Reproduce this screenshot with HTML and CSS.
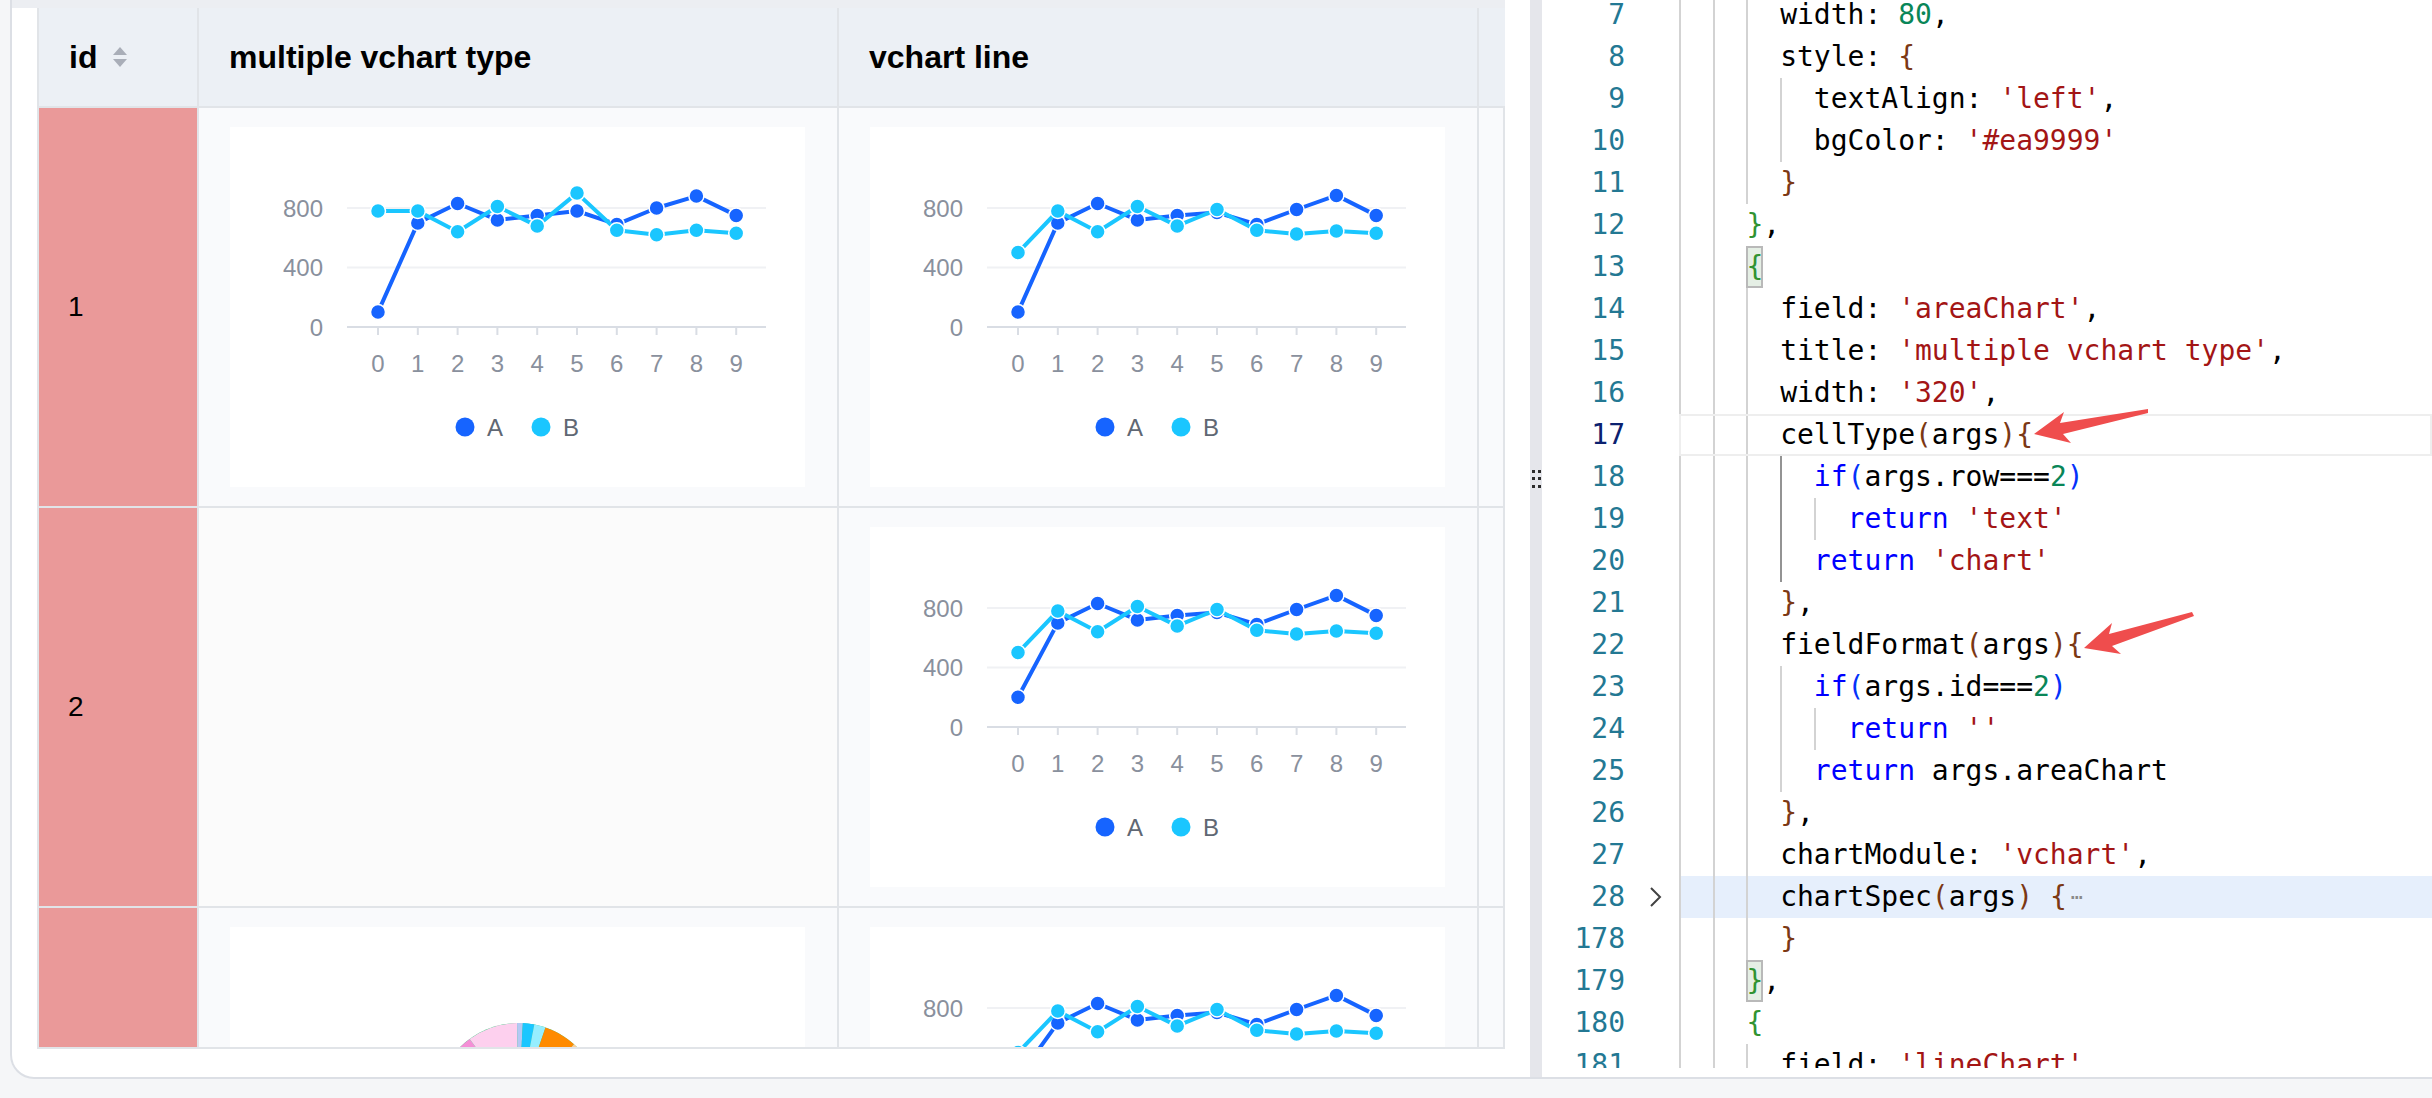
FILE: index.html
```html
<!DOCTYPE html>
<html lang="en">
<head>
<meta charset="utf-8">
<title>VTable chart cellType demo</title>
<link rel="stylesheet" href="styles.css">
</head>
<body>
<div class="card">
  <section class="left">
    <div class="topstrip"></div>
    <div class="tablewrap">
      <div class="grid">
        <div class="cell head"><span>id</span><svg class="sort" viewBox="0 0 14 20" width="14" height="20"><path d="M7 0L14 8H0Z"/><path d="M0 12H14L7 20Z"/></svg></div>
        <div class="cell head">multiple vchart type</div>
        <div class="cell head">vchart line</div>
        <div class="cell head"></div>

        <div class="cell idc">1</div>
        <div class="cell chart"><div class="box" data-a="100,700,830,720,750,780,690,800,880,750" data-b="780,780,640,810,680,900,650,620,650,630"></div></div>
        <div class="cell chart"><div class="box" data-a="100,700,830,720,750,770,690,790,885,750" data-b="500,780,640,810,680,790,650,625,645,630"></div></div>
        <div class="cell"></div>

        <div class="cell idc">2</div>
        <div class="cell empty"></div>
        <div class="cell chart"><div class="box" data-a="200,700,830,720,750,770,690,790,885,750" data-b="500,780,640,810,680,790,650,625,645,630"></div></div>
        <div class="cell"></div>

        <div class="cell idc"></div>
        <div class="cell chart"><div class="box">
          <svg class="pie" viewBox="0 0 575 360" width="575" height="360">
            <circle cx="288.5" cy="179" r="83" fill="#3cc780"/>
            <path d="M288.5 179L205.5 179A83 83 0 0 1 239.7 111.9Z" fill="#f48fd6"/>
            <path d="M288.5 179L239.7 111.9A83 83 0 0 1 287.05 96.01Z" fill="#fdd0ee"/>
            <path d="M288.5 179L287.05 96.01A83 83 0 0 1 292.84 96.1Z" fill="#b4c8f4"/>
            <path d="M288.5 179L292.84 96.1A83 83 0 0 1 304.3 97.5Z" fill="#1ac6ff"/>
            <path d="M288.5 179L304.3 97.5A83 83 0 0 1 315.5 100.5Z" fill="#96eeff"/>
            <path d="M288.5 179L315.5 100.5A83 83 0 0 1 344 117.3Z" fill="#ff8a00"/>
            <path d="M288.5 179L344 117.3A83 83 0 0 1 371.5 179Z" fill="#ffce96"/>
          </svg>
        </div></div>
        <div class="cell chart"><div class="box" data-partial="1" data-a="330,700,830,720,750,770,690,790,885,750" data-b="500,780,640,810,680,790,650,625,645,630"></div></div>
        <div class="cell"></div>
      </div>
    </div>
  </section>

  <div class="splitter"><svg class="grip" viewBox="0 0 12 18" width="12" height="18"><rect x="2" y="0" width="3" height="3"/><rect x="8" y="0" width="3" height="3"/><rect x="2" y="7" width="3" height="3"/><rect x="8" y="7" width="3" height="3"/><rect x="2" y="15" width="3" height="3"/><rect x="8" y="15" width="3" height="3"/></svg></div>

  <section class="editor">
    <div class="viewport">
      <div class="lines">
        <div class="ln"><span class="num">7</span><span class="fold"></span><span class="code i6">width: <span class="n">80</span>,</span></div>
        <div class="ln"><span class="num">8</span><span class="fold"></span><span class="code i6">style: <span class="b3">{</span></span></div>
        <div class="ln"><span class="num">9</span><span class="fold"></span><span class="code i8">textAlign: <span class="s">'left'</span>,</span></div>
        <div class="ln"><span class="num">10</span><span class="fold"></span><span class="code i8">bgColor: <span class="s">'#ea9999'</span></span></div>
        <div class="ln"><span class="num">11</span><span class="fold"></span><span class="code i6"><span class="b3">}</span></span></div>
        <div class="ln"><span class="num">12</span><span class="fold"></span><span class="code i4"><span class="b2">}</span>,</span></div>
        <div class="ln"><span class="num">13</span><span class="fold"></span><span class="code i4"><span class="bm b2">{</span></span></div>
        <div class="ln"><span class="num">14</span><span class="fold"></span><span class="code i6">field: <span class="s">'areaChart'</span>,</span></div>
        <div class="ln"><span class="num">15</span><span class="fold"></span><span class="code i6">title: <span class="s">'multiple vchart type'</span>,</span></div>
        <div class="ln"><span class="num">16</span><span class="fold"></span><span class="code i6">width: <span class="s">'320'</span>,</span></div>
        <div class="ln"><span class="num act">17</span><span class="fold"></span><span class="code i6 cur">cellType<span class="b3">(</span>args<span class="b3">)</span><span class="b3">{</span></span></div>
        <div class="ln"><span class="num">18</span><span class="fold"></span><span class="code i8 act6"><span class="k">if</span><span class="b1">(</span>args.row===<span class="n">2</span><span class="b1">)</span></span></div>
        <div class="ln"><span class="num">19</span><span class="fold"></span><span class="code i10 act6"><span class="k">return</span> <span class="s">'text'</span></span></div>
        <div class="ln"><span class="num">20</span><span class="fold"></span><span class="code i8 act6"><span class="k">return</span> <span class="s">'chart'</span></span></div>
        <div class="ln"><span class="num">21</span><span class="fold"></span><span class="code i6"><span class="b3">}</span>,</span></div>
        <div class="ln"><span class="num">22</span><span class="fold"></span><span class="code i6">fieldFormat<span class="b3">(</span>args<span class="b3">)</span><span class="b3">{</span></span></div>
        <div class="ln"><span class="num">23</span><span class="fold"></span><span class="code i8"><span class="k">if</span><span class="b1">(</span>args.id===<span class="n">2</span><span class="b1">)</span></span></div>
        <div class="ln"><span class="num">24</span><span class="fold"></span><span class="code i10"><span class="k">return</span> <span class="s">''</span></span></div>
        <div class="ln"><span class="num">25</span><span class="fold"></span><span class="code i8"><span class="k">return</span> args.areaChart</span></div>
        <div class="ln"><span class="num">26</span><span class="fold"></span><span class="code i6"><span class="b3">}</span>,</span></div>
        <div class="ln"><span class="num">27</span><span class="fold"></span><span class="code i6">chartModule: <span class="s">'vchart'</span>,</span></div>
        <div class="ln"><span class="num">28</span><span class="fold"><svg class="chev" viewBox="0 0 14 20" width="14" height="20"><path d="M2 1L11 10L2 19"/></svg></span><span class="code i6 folded">chartSpec<span class="b3">(</span>args<span class="b3">)</span> <span class="b3">{</span><span class="ell">⋯</span></span></div>
        <div class="ln"><span class="num">178</span><span class="fold"></span><span class="code i6"><span class="b3">}</span></span></div>
        <div class="ln"><span class="num">179</span><span class="fold"></span><span class="code i4"><span class="bm b2">}</span>,</span></div>
        <div class="ln"><span class="num">180</span><span class="fold"></span><span class="code i4"><span class="b2">{</span></span></div>
        <div class="ln last"><span class="num">181</span><span class="fold"></span><span class="code i6">field: <span class="s">'lineChart'</span>,</span></div>
      </div>
    </div>
    <svg class="arrows" viewBox="0 0 890 1077" width="890" height="1077">
      <polygon points="492,434 522,412 518,423 606,409 606,413 521,434 529,443"/>
      <polygon points="542,648 570,623 567,634 650,612 652,616 570,646 579,654"/>
    </svg>
  </section>
</div>
<script src="chart.js"></script>
</body>
</html>
```

FILE: styles.css
```css
* { box-sizing: border-box; margin: 0; padding: 0; }
html, body { width: 2432px; height: 1098px; overflow: hidden; }
body { background: #f5f6f8; font-family: "Liberation Sans", Arial, sans-serif; color: #000; }

.card {
  margin-left: 10px;
  width: 2422px;
  height: 1079px;
  background: #fff;
  border-left: 2px solid #dcdfe5;
  border-bottom: 2px solid #dcdfe5;
  border-bottom-left-radius: 24px;
  display: flex;
  overflow: hidden;
}

/* ---------- table side ---------- */
.left { width: 1518px; flex: none; display: flex; flex-direction: column; }
.topstrip { height: 8px; width: 1493px; background: #eceef2; }
.tablewrap {
  margin-left: 25px;
  width: 1468px;
  height: 1041px;
  overflow: hidden;
  border-left: 2px solid #e1e4e8;
  border-bottom: 2px solid #e1e4e8;
}
.grid {
  display: grid;
  grid-template-columns: 160px 640px 640px 26px;
  grid-template-rows: 100px 400px 400px 400px;
}
.cell {
  border-right: 2px solid #e1e4e8;
  border-bottom: 2px solid #e1e4e8;
  background: #f9fafc;
}
.head {
  background: #ecf0f5;
  display: flex;
  align-items: center;
  gap: 16px;
  padding-left: 30px;
  font-weight: bold;
  font-size: 32px;
  white-space: nowrap;
}
.sort { fill: #a9aeb8; flex: none; }
.idc {
  background: #ea9999;
  display: flex;
  align-items: center;
  padding-left: 29px;
  font-size: 28px;
}
.chart { padding: 19px 32px 19px 31px; }
.box { width: 575px; height: 360px; background: #fff; }
.empty { background: #fbfbfb; }

/* chart svg */
.lc, .pie { display: block; }
.gl { stroke: #f0f1f4; stroke-width: 2; }
.ax, .tk { stroke: #d9dde4; stroke-width: 2; }
.xl, .yl, .lt { font-family: "Liberation Sans", Arial, sans-serif; font-size: 24px; dominant-baseline: central; }
.xl { fill: #89909d; text-anchor: middle; }
.yl { fill: #89909d; text-anchor: end; }
.lt { fill: #606773; }
.line-a { fill: none; stroke: #1664ff; stroke-width: 4; stroke-linejoin: round; }
.line-b { fill: none; stroke: #1ac6ff; stroke-width: 4; stroke-linejoin: round; }
.pt-a { fill: #1664ff; stroke: #fff; stroke-width: 1.5; }
.pt-b { fill: #1ac6ff; stroke: #fff; stroke-width: 1.5; }
.lg-a { fill: #1664ff; }
.lg-b { fill: #1ac6ff; }

/* ---------- splitter ---------- */
.splitter { width: 12px; flex: none; background: #e5e6eb; display: flex; justify-content: center; }
.grip { margin-top: 470px; fill: #2b2b2b; }

/* ---------- editor ---------- */
.editor { flex: 1; position: relative; background: #fff; }
.viewport {
  height: 1068px;
  overflow: hidden;
  font-family: "DejaVu Sans Mono", monospace;
  font-size: 28px;
  line-height: 42px;
  color: #000;
}
.lines { margin-top: -6px; }
.ln { display: flex; height: 42px; }
.ln.last { height: 30px; overflow: hidden; align-items: flex-start; }
.num { width: 83px; flex: none; text-align: right; color: #237893; }
.num.act { color: #0b216f; }
.fold { width: 54px; flex: none; display: flex; align-items: center; padding-left: 24px; }
.chev { fill: none; stroke: #424242; stroke-width: 2; }
.code {
  flex: 1;
  white-space: pre;
  --ind: 0ch;
  padding-left: var(--ind);
  background-image: repeating-linear-gradient(90deg, #d3d3d3 0 2px, transparent 2px 2ch);
  background-size: var(--ind) 100%;
  background-repeat: no-repeat;
}
.i4 { --ind: 4ch; }
.i6 { --ind: 6ch; }
.i8 { --ind: 8ch; }
.i10 { --ind: 10ch; }
.code.act6 {
  background-image: linear-gradient(#939393, #939393), repeating-linear-gradient(90deg, #d3d3d3 0 2px, transparent 2px 2ch);
  background-size: 2px 100%, var(--ind) 100%;
  background-position: 6ch 0, 0 0;
  background-repeat: no-repeat, no-repeat;
}
.cur { box-shadow: inset 0 0 0 2px #eeeeee; }
.folded { background-color: #e6effc; }
.ell { color: #8a8a8a; font-size: 20px; margin-left: 4px; vertical-align: top; }

.k { color: #0000ff; }
.s { color: #a31515; }
.n { color: #098658; }
.b1 { color: #0431fa; }
.b2 { color: #319331; }
.b3 { color: #7b3814; }
.bm {
  display: inline-block;
  height: 42px;
  vertical-align: top;
  background: rgba(0, 100, 0, 0.1);
  box-shadow: inset 0 0 0 2px #b9b9b9;
}

.arrows { position: absolute; left: 0; top: 0; pointer-events: none; fill: #ef4d4d; }
```

FILE: chart.js
```js
(function () {
  var NS = 'http://www.w3.org/2000/svg';
  var X = [];
  for (var i = 0; i < 10; i++) X.push(+(148 + 39.8 * i).toFixed(1));
  function Y(v) { return +(200 - 0.14875 * v).toFixed(1); }
  function el(tag, attrs, parent, text) {
    var e = document.createElementNS(NS, tag);
    for (var k in attrs) e.setAttribute(k, attrs[k]);
    if (text !== undefined) e.textContent = text;
    parent.appendChild(e);
    return e;
  }
  var boxes = document.querySelectorAll('.box[data-a]');
  for (var b = 0; b < boxes.length; b++) {
    var box = boxes[b];
    var partial = box.hasAttribute('data-partial');
    var A = box.getAttribute('data-a').split(',').map(Number);
    var B = box.getAttribute('data-b').split(',').map(Number);
    var s = document.createElementNS(NS, 'svg');
    s.setAttribute('viewBox', '0 0 575 360');
    s.setAttribute('width', '575');
    s.setAttribute('height', '360');
    s.setAttribute('class', 'lc');
    el('line', { x1: 117, y1: 81, x2: 536, y2: 81, 'class': 'gl' }, s);
    el('line', { x1: 117, y1: 140.5, x2: 536, y2: 140.5, 'class': 'gl' }, s);
    el('line', { x1: 117, y1: 200, x2: 536, y2: 200, 'class': 'ax' }, s);
    for (var j = 0; j < 10; j++) {
      el('line', { x1: X[j], y1: 201, x2: X[j], y2: 208, 'class': 'tk' }, s);
      if (!partial) el('text', { x: X[j], y: 236, 'class': 'xl' }, s, String(j));
    }
    el('text', { x: 93, y: 81, 'class': 'yl' }, s, '800');
    if (!partial) {
      el('text', { x: 93, y: 140.5, 'class': 'yl' }, s, '400');
      el('text', { x: 93, y: 200, 'class': 'yl' }, s, '0');
    }
    [[A, 'a'], [B, 'b']].forEach(function (p) {
      el('polyline', { points: p[0].map(function (v, k) { return X[k] + ',' + Y(v); }).join(' '), 'class': 'line-' + p[1] }, s);
      p[0].forEach(function (v, k) { el('circle', { cx: X[k], cy: Y(v), r: 7.5, 'class': 'pt-' + p[1] }, s); });
    });
    el('circle', { cx: 235, cy: 300, r: 9.5, 'class': 'lg-a' }, s);
    el('circle', { cx: 311, cy: 300, r: 9.5, 'class': 'lg-b' }, s);
    if (!partial) {
      el('text', { x: 257, y: 300, 'class': 'lt' }, s, 'A');
      el('text', { x: 333, y: 300, 'class': 'lt' }, s, 'B');
    }
    box.appendChild(s);
  }
})();
```
